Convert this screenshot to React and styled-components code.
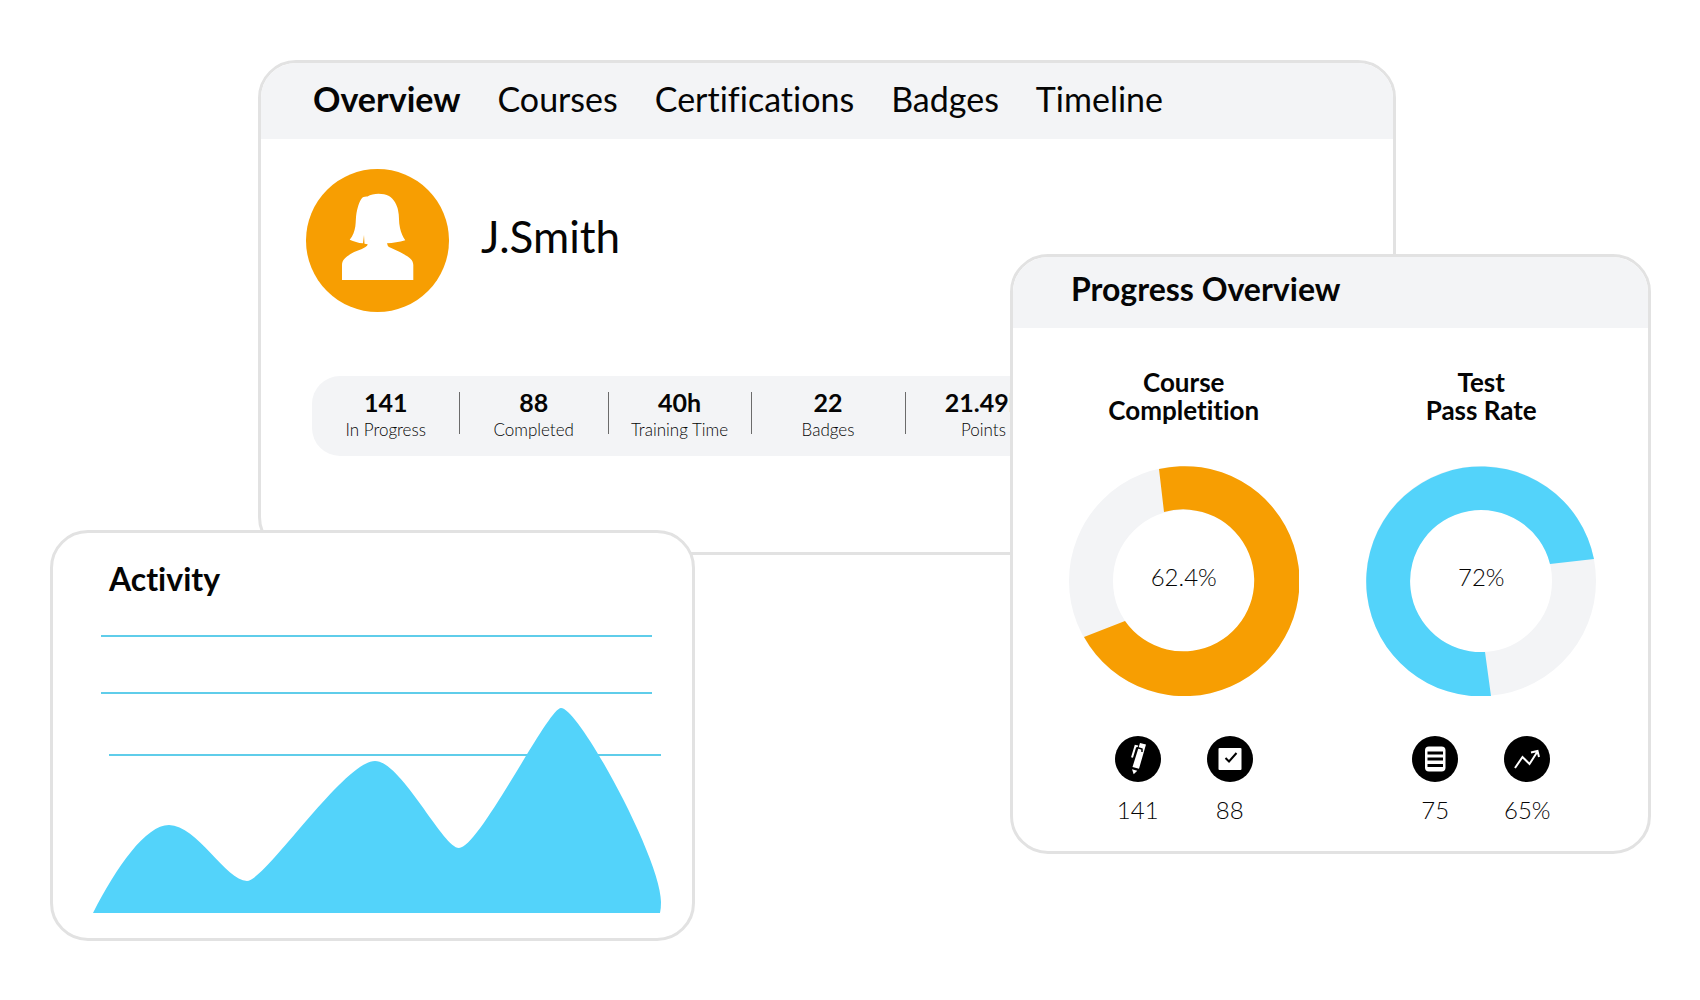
import React, { useState } from 'react';
import styled, { createGlobalStyle } from 'styled-components';

const ORANGE = '#f79e02';
const BLUE = '#53d3fa';
const PALE = '#f3f4f6';

const tabs = ['Overview', 'Courses', 'Certifications', 'Badges', 'Timeline'];

const stats = [
  { value: '141', label: 'In Progress' },
  { value: '88', label: 'Completed' },
  { value: '40h', label: 'Training Time' },
  { value: '22', label: 'Badges' },
  { value: '21.49k', label: 'Points' }
];

const AvatarIcon = () => (
  <svg viewBox="0 0 143 143" width="143" height="143" role="img" aria-label="J.Smith">
    <circle cx="71.5" cy="71.5" r="71.5" fill={ORANGE} />
    <path
      fill="#fff"
      d="M61.5 27.5C67 24 77 24 83 27C88 30 91 36 92 41C93.500 47 92.500 53 94 59C95 64 97 68 99.300 71.300C93 73 87 74 81 74.300Q81.500 77 83 78C87 80 93 82 97.500 85C103 88 107.300 91 107.300 96V111H36V96C36 91 40 88 44.500 85C49 82 55 81 59.500 78Q61.500 77 61.700 75.300L58.500 74.800L58 66L57 74.300C52 74 48 72.500 43.700 70.700C47 67 48.500 62 49.300 57.500C50 53 49.700 48 50.500 44C52 37 54 29.500 57.500 28Q59.500 27.200 61.500 27.500Z"
    />
  </svg>
);

const PenIcon = () => (
  <svg viewBox="0 0 46 46" width="46" height="46" aria-hidden="true">
    <circle cx="23" cy="23" r="23" />
    <path fill="#fff" d="M25 7l6 1.500-7 24.300-6.500-1.800zM17 33.300l5.300 1.400-3.600 3.600z" />
    <path fill="none" stroke="#fff" strokeWidth="2" d="M23 10.500l-2.500-.5-3.500 11.500" />
    <path fill="none" stroke="#000" strokeWidth="1.500" d="M22 11.500l5 1.500v3" />
  </svg>
);

const CheckIcon = () => (
  <svg viewBox="0 0 46 46" width="46" height="46" aria-hidden="true">
    <circle cx="23" cy="23" r="23" />
    <rect x="11.500" y="12" width="23" height="22" rx="1" fill="#fff" />
    <path fill="none" stroke="#000" strokeWidth="2" d="M18.500 22l3.500 3.500 7.500-8.500" />
  </svg>
);

const ListIcon = () => (
  <svg viewBox="0 0 46 46" width="46" height="46" aria-hidden="true">
    <circle cx="23" cy="23" r="23" />
    <rect x="13" y="10.500" width="20.500" height="25" rx="4" fill="#fff" />
    <path stroke="#000" strokeWidth="3" d="M15.500 17H31M15.500 23H31M15.500 29.500H31" />
  </svg>
);

const TrendIcon = () => (
  <svg viewBox="0 0 46 46" width="46" height="46" aria-hidden="true">
    <circle cx="23" cy="23" r="23" />
    <path fill="none" stroke="#fff" strokeWidth="2" d="M11 32l7.500-11 7 7 8-12.500M27 16.500l6.500-1.500 1.500 6" />
  </svg>
);

// Arcs are drawn round the origin: outer radius 115, inner radius 71
const rings = [
  {
    title: ['Course', 'Completition'],
    percent: '62.4%',
    color: ORANGE,
    arc: 'M-25-112A115 115 0 1 1-100 56L-59 40A71 71 0 1 0-20-69Z',
    metrics: [
      { icon: PenIcon, value: '141' },
      { icon: CheckIcon, value: '88' }
    ]
  },
  {
    title: ['Test', 'Pass Rate'],
    percent: '72%',
    color: BLUE,
    arc: 'M10 115A115 115 0 1 1 113-22L69-17A71 71 0 1 0 4 71Z',
    metrics: [
      { icon: ListIcon, value: '75' },
      { icon: TrendIcon, value: '65%' }
    ]
  }
];

const App = () => {
  const [activeTab, setActiveTab] = useState('Overview');

  return (
    <>
      <GlobalStyle />
      <Stage>
        <ProfileCard>
          <TabBar>
            {tabs.map(tab => (
              <TabButton
                key={tab}
                type="button"
                $active={tab === activeTab}
                onClick={() => setActiveTab(tab)}
              >
                {tab}
              </TabButton>
            ))}
          </TabBar>
          <ProfileBody>
            <Person>
              <AvatarIcon />
              <PersonName>J.Smith</PersonName>
            </Person>
            <StatBar>
              {stats.map(stat => (
                <Stat key={stat.label}>
                  <StatValue>{stat.value}</StatValue>
                  <StatLabel>{stat.label}</StatLabel>
                </Stat>
              ))}
            </StatBar>
          </ProfileBody>
        </ProfileCard>

        <ActivityCard>
          <ActivityHeader>
            <CardTitle>Activity</CardTitle>
          </ActivityHeader>
          <ActivityChart viewBox="0 0 569 279" role="img" aria-label="Activity">
            <path fill="none" stroke="#5fcdea" strokeWidth="2" d="M8 2H559M8 59H559M16 121H568" />
            <path
              fill={BLUE}
              d="M0 279C24 232 53 191 76 191C104 191 133 247 154 247C172 247 251 127 282 127C308 127 350 214 366 214C386 214 455 74 468 74C486 74 568 225 568 268Q568 275 567 279Z"
            />
          </ActivityChart>
        </ActivityCard>

        <ProgressCard>
          <ProgressHeader>
            <CardTitle>Progress Overview</CardTitle>
          </ProgressHeader>
          <RingGrid>
            {rings.map(ring => (
              <RingColumn key={ring.percent}>
                <RingTitle>
                  {ring.title[0]}
                  <br />
                  {ring.title[1]}
                </RingTitle>
                <Ring>
                  <svg viewBox="-115 -115 230 230" width="230" height="230" aria-hidden="true">
                    <circle r="93" fill="none" stroke={PALE} strokeWidth="44" />
                    <path d={ring.arc} fill={ring.color} />
                  </svg>
                  <RingPercent>{ring.percent}</RingPercent>
                </Ring>
                <Metrics>
                  {ring.metrics.map(({ icon: Icon, value }) => (
                    <Metric key={value}>
                      <Icon />
                      {value}
                    </Metric>
                  ))}
                </Metrics>
              </RingColumn>
            ))}
          </RingGrid>
        </ProgressCard>
      </Stage>
    </>
  );
};

// Styled components
const GlobalStyle = createGlobalStyle`
  * {
    box-sizing: border-box;
  }

  body {
    margin: 0;
    background: #fff;
    color: #050505;
    font-family: Lato, 'Liberation Sans', sans-serif;
    font-variant-ligatures: none;
  }

  svg {
    display: block;
  }
`;

/* The three cards share one grid and overlap where their areas cross */
const Stage = styled.main`
  display: grid;
  grid-template-columns: 50fr 208fr 437fr 315fr 386fr 255fr 49fr;
  grid-template-rows:
    60px minmax(194px, auto) minmax(276px, auto) minmax(25px, auto)
    minmax(299px, auto) minmax(87px, auto);
  min-height: 100vh;
  align-content: start;
`;

const Card = styled.section`
  min-width: 0;
  background: #fff;
  border: 3px solid #e2e2e2;
  border-radius: 38px;
  overflow: hidden;
`;

const ProfileCard = styled(Card)`
  grid-column: 3 / 6;
  grid-row: 2 / 5;
`;

const ActivityCard = styled(Card)`
  grid-column: 2 / 4;
  grid-row: 4 / 7;
  padding: 26px 30px 24px 40px;
`;

const ProgressCard = styled(Card)`
  grid-column: 5 / 7;
  grid-row: 3 / 6;
`;

const TabBar = styled.nav`
  display: flex;
  gap: 37px;
  padding: 16px 52px 20px;
  background: ${PALE};
`;

const TabButton = styled.button`
  padding: 0;
  border: none;
  background: none;
  color: inherit;
  cursor: pointer;
  font-family: inherit;
  font-size: 34px;
  font-variant-ligatures: none;
  line-height: 40px;
  font-weight: ${props => (props.$active ? 700 : 400)};
`;

const ProfileBody = styled.div`
  padding: 30px 45px 0;
`;

const Person = styled.div`
  display: flex;
  align-items: center;
  gap: 32px;
`;

const PersonName = styled.h1`
  margin: 0;
  padding-bottom: 10px;
  font-size: 44px;
  line-height: 48px;
  font-weight: 400;
`;

const StatBar = styled.div`
  display: grid;
  grid-template-columns: 147fr 148fr 143fr 153fr 157fr;
  width: 72%;
  margin: 64px 0 0 6px;
  padding: 12px 0;
  border-radius: 28px;
  background: ${PALE};
`;

const Stat = styled.div`
  display: flex;
  flex-direction: column;
  align-items: center;
  white-space: nowrap;

  /* Divider, shorter than the cell it separates */
  & + & {
    background: linear-gradient(#6b6b6b, #6b6b6b) 0 4px / 1px 42px no-repeat;
  }
`;

const StatValue = styled.strong`
  font-size: 25px;
  line-height: 28px;
  font-weight: 700;
`;

const StatLabel = styled.span`
  font-size: 17px;
  line-height: 28px;
  font-weight: 300;
`;

const CardTitle = styled.h2`
  margin: 0;
  font-size: 32px;
  line-height: 40px;
  font-weight: 700;
`;

const ActivityHeader = styled.header`
  padding: 0 16px 35px;
`;

const ActivityChart = styled.svg`
  width: 100%;
  height: auto;
`;

const ProgressHeader = styled.header`
  padding: 12px 58px 19px;
  background: ${PALE};
`;

const RingGrid = styled.div`
  display: grid;
  grid-template-columns: 1fr 1fr;
  padding: 40px 18px 0 22px;
`;

const RingColumn = styled.div`
  display: flex;
  flex-direction: column;
  align-items: center;
`;

const RingTitle = styled.h3`
  margin: 0;
  font-size: 26px;
  line-height: 28px;
  font-weight: 700;
  text-align: center;
`;

const Ring = styled.div`
  display: grid;
  place-items: center;
  margin-top: 42px;

  & > * {
    grid-area: 1 / 1;
  }
`;

const RingPercent = styled.span`
  padding-bottom: 8px;
  font-size: 24px;
  line-height: 32px;
  font-weight: 300;
`;

const Metrics = styled.div`
  display: flex;
  gap: 46px;
  margin-top: 40px;
`;

const Metric = styled.div`
  display: flex;
  flex-direction: column;
  align-items: center;
  gap: 12px;
  width: 46px;
  font-size: 24px;
  line-height: 32px;
  font-weight: 300;
`;

export default App;
